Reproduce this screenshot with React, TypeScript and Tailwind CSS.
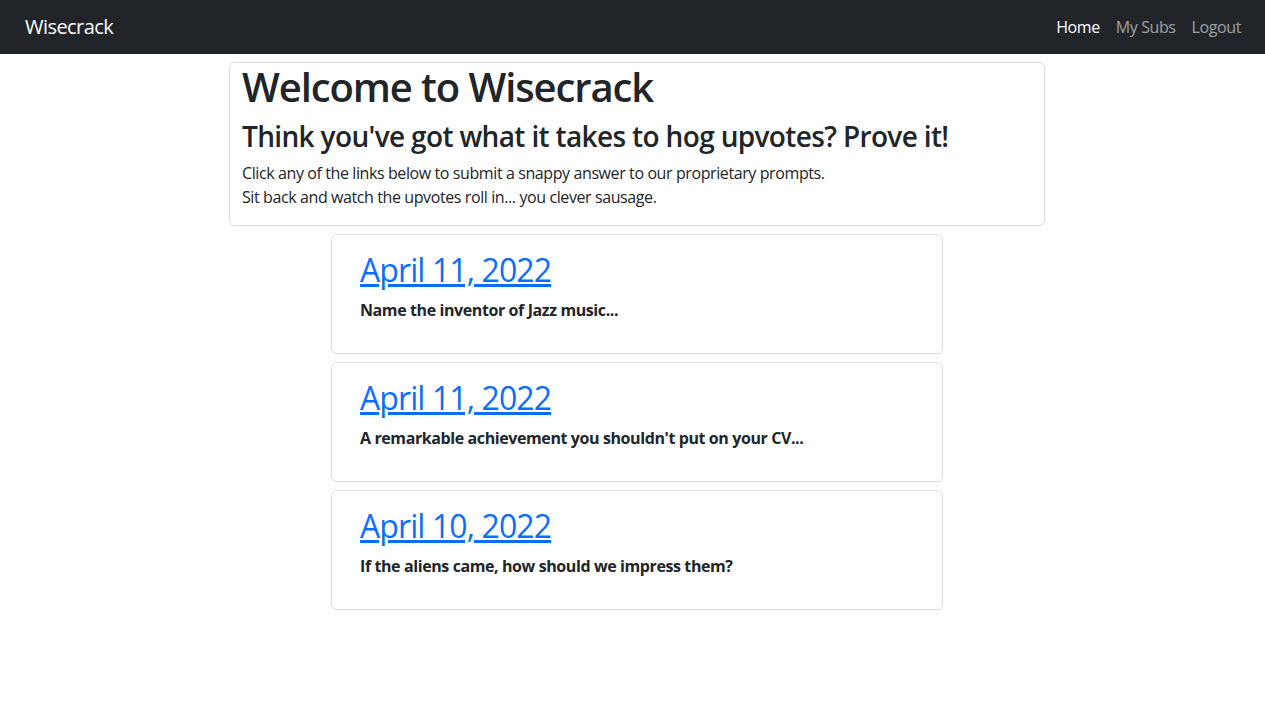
const prompts = [
  { id: 1, date: 'April 11, 2022', text: 'Name the inventor of Jazz music...' },
  { id: 2, date: 'April 11, 2022', text: "A remarkable achievement you shouldn't put on your CV..." },
  { id: 3, date: 'April 10, 2022', text: 'If the aliens came, how should we impress them?' },
];

export default function App() {
  return (
    <div className="min-h-screen bg-white text-[#212529] font-['Open_Sans',sans-serif]">
      {/* NAVBAR */}
      <nav className="h-[54px] bg-[#212529] flex items-center justify-between pl-[25px] pr-[24px]">
        <a href="#" className="text-white text-[20px] leading-[30px] tracking-[-0.55px]">Wisecrack</a>
        <div className="flex items-center gap-[16px] text-[16px] tracking-[-0.4px]">
          <a href="#" className="text-white">Home</a>
          <a href="#" className="text-white/55">My Subs</a>
          <a href="#" className="text-white/55">Logout</a>
        </div>
      </nav>

      <div className="w-[816px] ml-[229px] mt-[8px]">
        {/* JUMBO HEADER */}
        <div className="border border-[#dfdfdf] rounded-[5px] px-[12px]">
          <h1 className="text-[40px] leading-[48px] font-semibold tracking-[-1.1px] mb-[8px]">Welcome to Wisecrack</h1>
          <h3 className="text-[28px] leading-[34px] font-semibold tracking-[-0.65px] mb-[8px]">Think you've got what it takes to hog upvotes? Prove it!</h3>
          <p className="text-[16px] leading-[24px] tracking-[-0.4px] mb-[16px]">
            Click any of the links below to submit a snappy answer to our proprietary prompts.
            <br />
            Sit back and watch the upvotes roll in... you clever sausage.
          </p>
        </div>

        {/* PROMPT CARDS */}
        <div className="w-[612px] mx-auto mt-[8px] flex flex-col gap-[8px]">
          {prompts.map((p) => (
            <div key={p.id} className="border border-[#dfdfdf] rounded-[5px] h-[120px] pt-[16px] pl-[28px]">
              <h2 className="text-[32px] leading-[38px] font-medium tracking-[-0.9px] mb-[9px]">
                <a href="#" className="text-[#0d6efd] underline">{p.date}</a>
              </h2>
              <p className="text-[16px] leading-[24px] font-bold tracking-[-0.4px]">{p.text}</p>
            </div>
          ))}
        </div>
      </div>
    </div>
  );
}
